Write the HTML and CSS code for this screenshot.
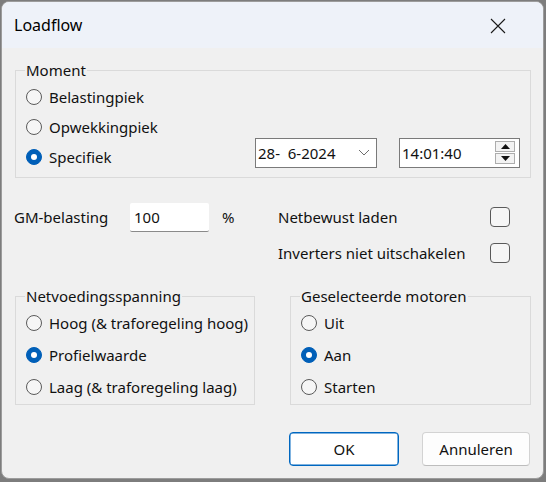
FILE: index.html
```html
<!DOCTYPE html>
<html lang="nl">
<head>
<meta charset="utf-8">
<title>Loadflow</title>
<link rel="stylesheet" href="styles.css">
</head>
<body>
<div class="window">
  <header class="titlebar">
    <span class="title">Loadflow</span>
    <svg class="close" width="16" height="16" viewBox="0 0 16 16"><path d="M1 1 L15 15 M15 1 L1 15" stroke="#1a1a1a" stroke-width="1.1" fill="none"/></svg>
  </header>
  <main class="content">
    <fieldset class="group moment">
      <legend>Moment</legend>
      <label class="row"><input type="radio" name="m"><span>Belastingpiek</span></label>
      <label class="row"><input type="radio" name="m"><span>Opwekkingpiek</span></label>
      <div class="row">
        <label class="opt"><input type="radio" name="m" checked><span>Specifiek</span></label>
        <div class="field date"><span class="val">28-  6-2024</span>
          <svg class="chev" width="12" height="7" viewBox="0 0 12 7"><path d="M1 1 L6 6 L11 1" stroke="#6e6e6e" stroke-width="1" fill="none"/></svg>
        </div>
        <div class="field time"><span class="val">14:01:40</span>
          <div class="spin">
            <span class="sbtn"><svg width="9" height="5" viewBox="0 0 9 5"><path d="M0 5 L4.5 0 L9 5 Z" fill="#111"/></svg></span>
            <span class="sbtn"><svg width="9" height="5" viewBox="0 0 9 5"><path d="M0 0 L4.5 5 L9 0 Z" fill="#111"/></svg></span>
          </div>
        </div>
      </div>
    </fieldset>

    <section class="mid">
      <div class="left">
        <span class="lbl">GM-belasting</span>
        <input class="num" type="text" value="100">
        <span class="pct">%</span>
      </div>
      <div class="right">
        <label class="chk"><span>Netbewust laden</span><input type="checkbox"></label>
        <label class="chk"><span>Inverters niet uitschakelen</span><input type="checkbox"></label>
      </div>
    </section>

    <section class="lower">
      <fieldset class="group net">
        <legend>Netvoedingsspanning</legend>
        <label class="row r32"><input type="radio" name="n"><span>Hoog (&amp; traforegeling hoog)</span></label>
        <label class="row r32"><input type="radio" name="n" checked><span>Profielwaarde</span></label>
        <label class="row r32"><input type="radio" name="n"><span>Laag (&amp; traforegeling laag)</span></label>
      </fieldset>
      <fieldset class="group mot">
        <legend>Geselecteerde motoren</legend>
        <label class="row r32"><input type="radio" name="g"><span>Uit</span></label>
        <label class="row r32"><input type="radio" name="g" checked><span>Aan</span></label>
        <label class="row r32"><input type="radio" name="g"><span>Starten</span></label>
      </fieldset>
    </section>

    <footer class="buttons">
      <button class="btn ok">OK</button>
      <button class="btn">Annuleren</button>
    </footer>
  </main>
</div>
</body>
</html>
```
FILE: styles.css
```css
* { box-sizing: border-box; }
html, body { margin: 0; padding: 0; }
body {
  background: #7d7d7d;
  width: 546px;
  height: 482px;
  overflow: hidden;
  font-family: "Noto Sans", "Open Sans", sans-serif;
  font-size: 15px;
  color: #111;
}
.window {
  margin: 1px 0 0 1px;
  width: 543px;
  height: 478px;
  border: 1px solid #9c9c9c;
  border-radius: 8px;
  overflow: hidden;
  background: #f0f0f0;
  display: flex;
  flex-direction: column;
}
.titlebar {
  height: 46px;
  flex: 0 0 46px;
  background: #eef2f9;
  display: flex;
  align-items: center;
  justify-content: space-between;
  padding-left: 12px;
}
.title { font-size: 16px; color: #000; }
.close { margin-right: 37px; margin-top: 1px; }

.content { padding: 13px 12px 0 13px; }

.group {
  margin: 0;
  border: 1px solid #dadada;
  padding: 3px 10px 5px 10px;
  min-width: 0;
}
.group legend {
  padding: 0 1px;
  margin-left: -1px;
  line-height: 18px;
  height: 18px;
  white-space: nowrap;
}
.row {
  display: flex;
  align-items: center;
  height: 30px;
  white-space: nowrap;
}
.r32 { height: 32px; }
.opt { display: flex; align-items: center; }
.row input[type=radio], .opt input[type=radio] {
  appearance: none;
  -webkit-appearance: none;
  margin: 0 7px 0 0;
  width: 16px;
  height: 16px;
  border: 1px solid #5a5a5a;
  border-radius: 50%;
  background: #f6f6f6;
  flex: 0 0 16px;
  display: grid;
  place-items: center;
}
.row input[type=radio]:checked, .opt input[type=radio]:checked {
  background: #005fb8;
  border-color: #005fb8;
}
.row input[type=radio]:checked::after, .opt input[type=radio]:checked::after {
  content: "";
  width: 6px;
  height: 6px;
  border-radius: 50%;
  background: #fff;
}

.field {
  height: 30px;
  background: #fff;
  border: 1px solid #7a7a7a;
  display: flex;
  align-items: center;
  margin-bottom: 9px;
  padding-left: 2px;
}
.val { white-space: pre; }
.date { margin-left: auto; width: 122px; }
.chev { margin-left: auto; margin-right: 6px; }
.time { margin-left: 22px; width: 121px; padding-right: 4px; }
.spin {
  margin-left: auto;
  display: flex;
  flex-direction: column;
  gap: 1px;
}
.sbtn {
  width: 20px;
  height: 11px;
  border: 1px solid #adadad;
  background: #f3f3f3;
  display: grid;
  place-items: center;
}

.mid {
  margin-top: 21px;
  display: flex;
  margin-left: -1px;
}
.left {
  width: 264px;
  height: 36px;
  display: flex;
  align-items: center;
}
.lbl { width: 116px; }
.num {
  width: 79px;
  height: 29px;
  border: none;
  border-bottom: 1px solid #8a8a8a;
  border-radius: 2px;
  background: #fff;
  font: inherit;
  color: inherit;
  padding: 0 0 0 4px;
  outline: none;
}
.pct { margin-left: 13px; }
.right { width: 232px; }
.chk {
  display: flex;
  align-items: center;
  justify-content: space-between;
  height: 36px;
  white-space: nowrap;
}
.chk input {
  appearance: none;
  -webkit-appearance: none;
  margin: 0;
  width: 20px;
  height: 20px;
  border: 1px solid #5a5a5a;
  border-radius: 4px;
  background: #f6f6f6;
}

.lower {
  margin-top: 16px;
  display: flex;
  gap: 35px;
}
.net, .mot { padding: 2px 0 1px 10px; }
.net { width: 241px; }
.mot { width: 242px; }

.buttons {
  margin-top: 27px;
  display: flex;
  justify-content: flex-end;
  gap: 23px;
  padding-right: 1px;
}
.btn {
  height: 34px;
  width: 108px;
  font: inherit;
  color: #111;
  background: #fdfdfd;
  border: 1px solid #d3d3d3;
  border-bottom-color: #bdbdbd;
  border-radius: 4px;
}
.btn.ok {
  width: 110px;
  border: 1px solid #0067c0;
  box-shadow: inset 0 0 0 0.5px #0067c0;
  background: #fff;
}
```
